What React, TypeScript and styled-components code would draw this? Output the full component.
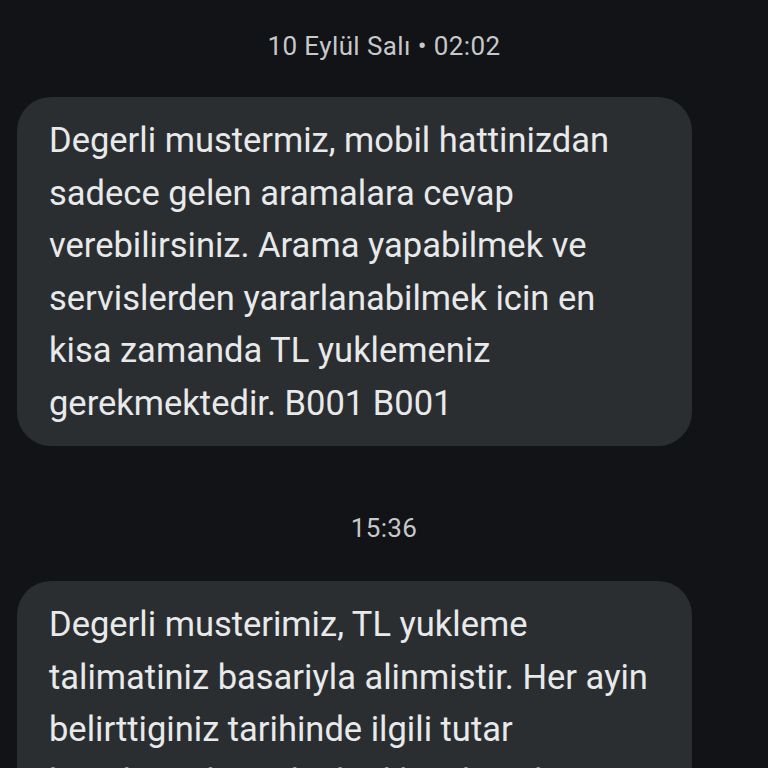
import React from "react";
import styled, { createGlobalStyle } from "styled-components";

const GlobalStyle = createGlobalStyle`
  html, body {
    margin: 0;
    padding: 0;
    background: #111316;
    overflow: hidden;
  }
  * { box-sizing: border-box; }
`;

const Thread = styled.div`
  width: 768px;
  height: 768px;
  overflow: hidden;
  background: #111316;
  display: flex;
  flex-direction: column;
  align-items: flex-start;
  padding: 29px 0 0 17px;
  font-family: Roboto, "Noto Sans", sans-serif;
`;

const Stamp = styled.div<{ $top: number; $bottom: number }>`
  align-self: center;
  margin-left: -17px;
  color: #c6c8cb;
  font-size: 26px;
  letter-spacing: 0.4px;
  line-height: 34px;
  margin-top: ${(p) => p.$top}px;
  margin-bottom: ${(p) => p.$bottom}px;
`;

const Bubble = styled.div`
  width: 675px;
  background: #2b2e31;
  border-radius: 34px;
  padding: 17px 20px 17px 32px;
  color: #e8e9ea;
  font-size: 34.5px;
  line-height: 52.5px;
  white-space: pre-line;
`;

const first = `Degerli mustermiz, mobil hattinizdan
sadece gelen aramalara cevap
verebilirsiniz. Arama yapabilmek ve
servislerden yararlanabilmek icin en
kisa zamanda TL yuklemeniz
gerekmektedir. B001 B001`;

const second = `Degerli musterimiz, TL yukleme
talimatiniz basariyla alinmistir. Her ayin
belirttiginiz tarihinde ilgili tutar
hesabinizdan tahsil edilecek. Talimatiniz
icin tesekkur ederiz.`;

export default function App() {
  return (
    <>
      <GlobalStyle />
      <Thread>
        <Stamp $top={0} $bottom={34}>10 Eylül Salı • 02:02</Stamp>
        <Bubble>{first}</Bubble>
        <Stamp $top={65} $bottom={36}>15:36</Stamp>
        <Bubble>{second}</Bubble>
      </Thread>
    </>
  );
}
